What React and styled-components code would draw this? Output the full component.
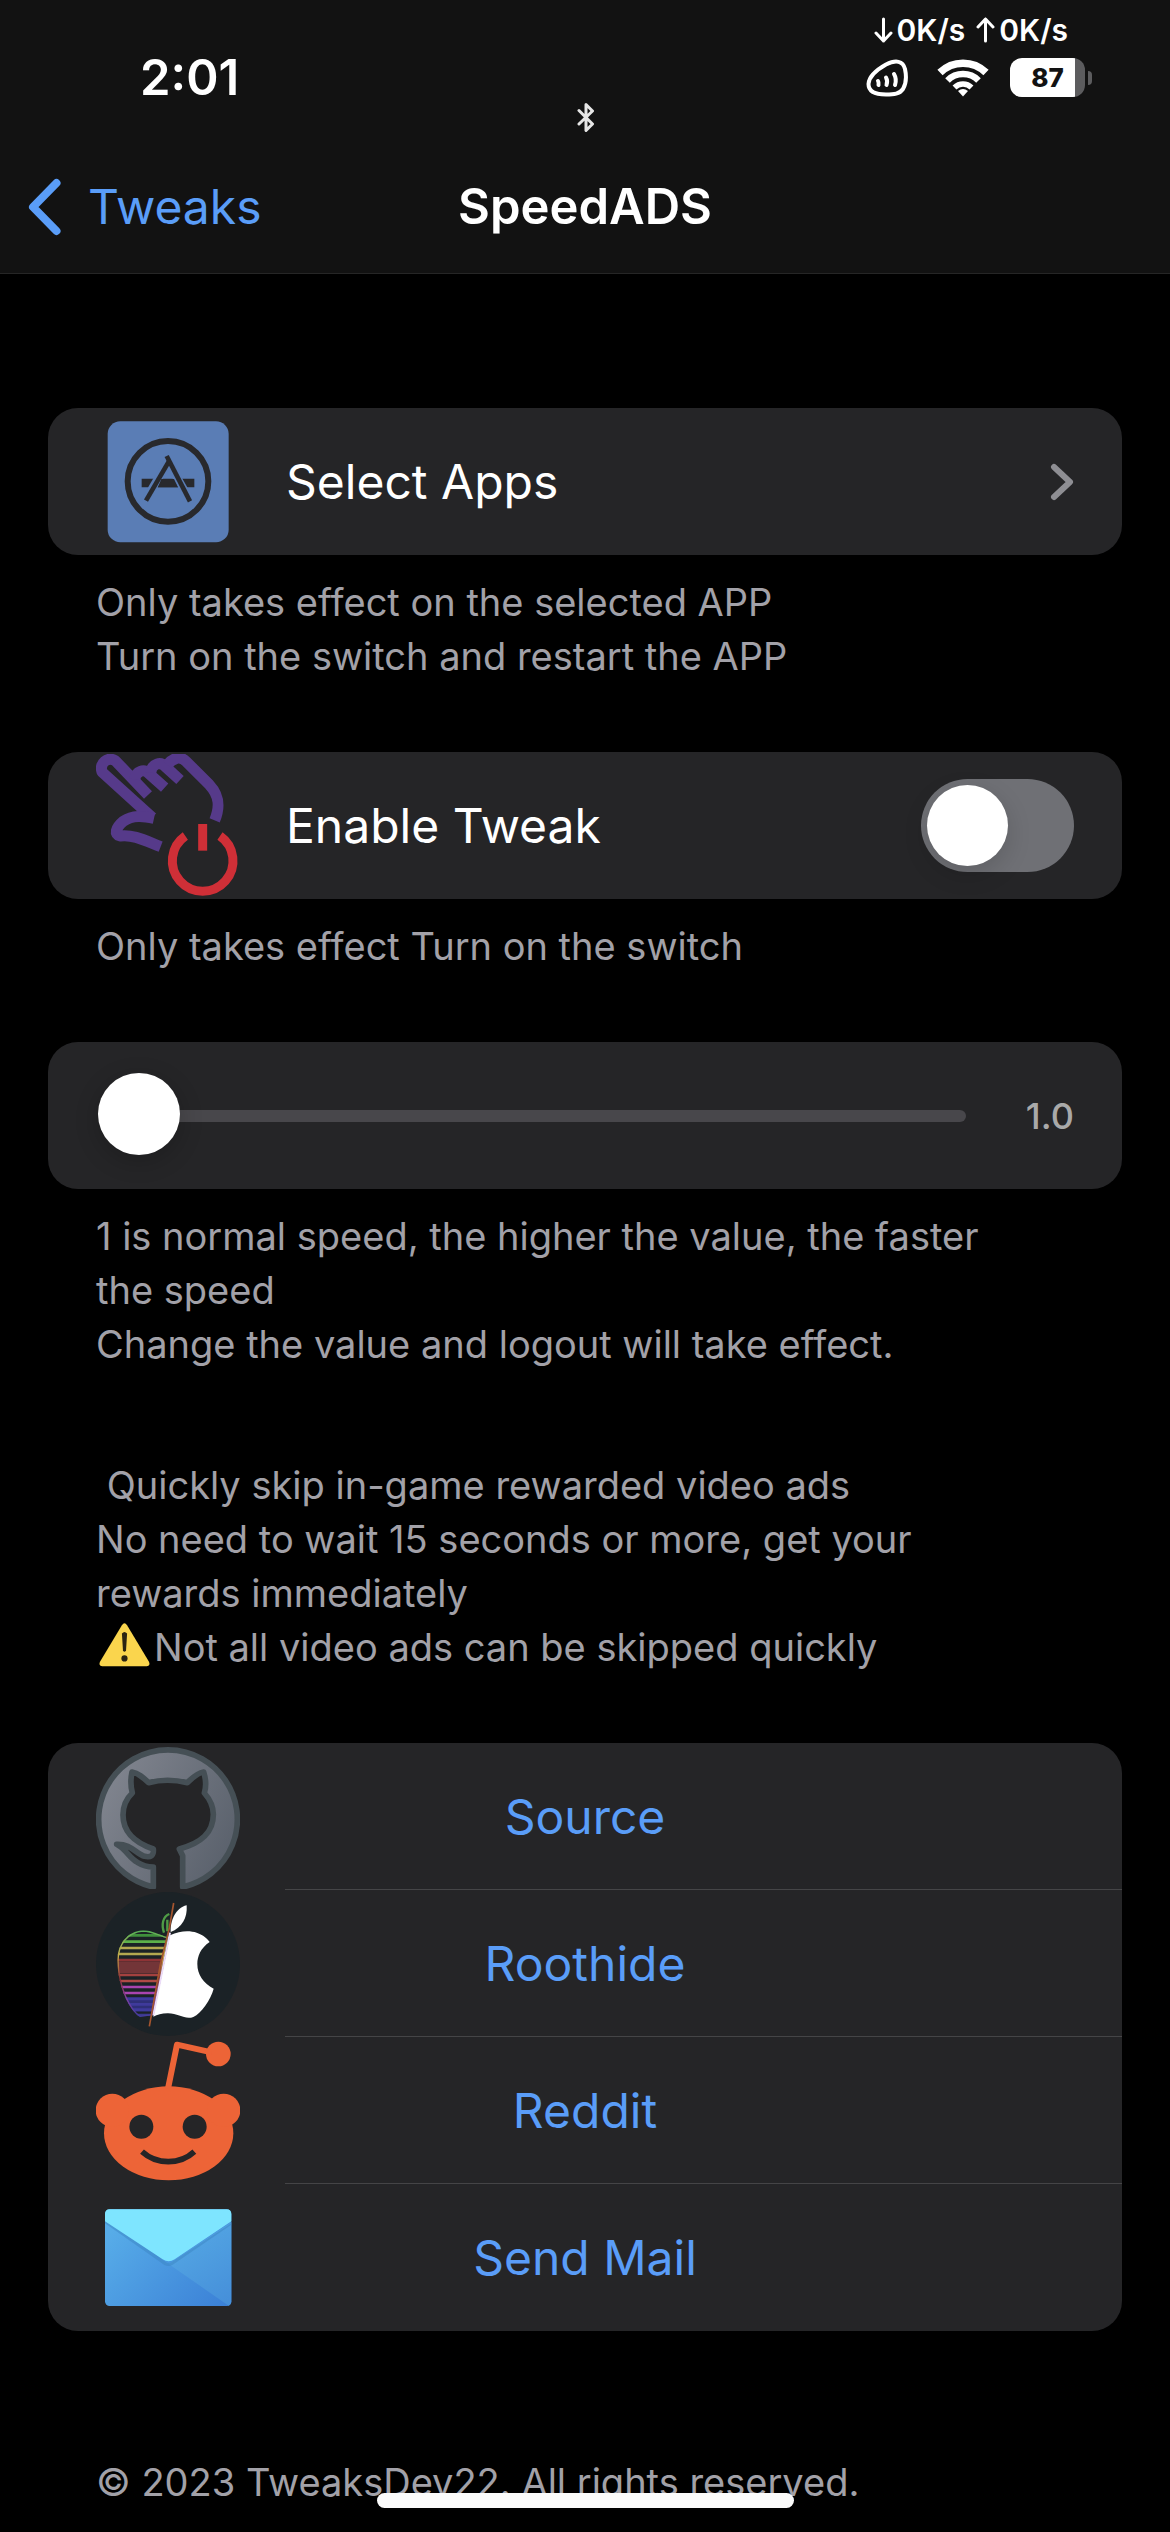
import React, { useState } from "react";
import styled, { createGlobalStyle } from "styled-components";

const GlobalStyle = createGlobalStyle`
  *, *::before, *::after { box-sizing: border-box; }
  body {
    margin: 0;
    background: #000;
    color: #fff;
    font-family: Inter, "Liberation Sans", sans-serif;
  }
  h1, p { margin: 0; }
`;

const Page = styled.div`
  min-height: 100vh;
  background: #000;
`;

const Header = styled.header`
  background: #121212;
  border-bottom: 1px solid #262626;
`;

const StatusBar = styled.div`
  display: grid;
  grid-template-columns: 1fr auto 1fr;
  height: 140px;
  padding: 0 78px 0 140px;
`;

const Clock = styled.time`
  padding-top: 46px;
  font-size: 49px;
  line-height: 64px;
  font-weight: 600;
`;

const BluetoothSlot = styled.div`
  align-self: end;
  display: flex;
  padding-bottom: 7px;
  margin-right: 60px;
`;

const StatusSide = styled.div`
  display: flex;
  flex-direction: column;
  align-items: flex-end;
  gap: 9px;
  padding-top: 11px;
`;

const NetSpeed = styled.div`
  display: flex;
  gap: 11px;
  padding-right: 24px;
  font-size: 30px;
  line-height: 38px;
  font-weight: 600;
`;

const Speed = styled.span`
  display: flex;
  align-items: center;
  gap: 4px;
`;

const StatusIcons = styled.div`
  display: flex;
  align-items: center;
`;

const IconGap = styled.div`
  display: flex;
  margin-right: ${(p) => p.$space}px;
`;

const Battery = styled.div`
  width: 75px;
  height: 39px;
  border-radius: 12px;
  display: flex;
  align-items: center;
  justify-content: center;
  background: linear-gradient(to right, #fff 87%, #5c5c5e 87%);
  color: #121212;
  font-size: 26px;
  font-weight: 800;
`;

const BatteryTip = styled.div`
  width: 4px;
  height: 14px;
  margin-left: 3px;
  border-radius: 0 4px 4px 0;
  background: #5c5c5e;
`;

const NavBar = styled.nav`
  display: grid;
  grid-template-columns: 1fr auto 1fr;
  align-items: center;
  height: 133px;
  padding: 0 28px;
`;

const BackLink = styled.a`
  display: flex;
  align-items: center;
  gap: 27px;
  color: #5a9df8;
  font-size: 48px;
  line-height: 64px;
  text-decoration: none;
`;

const Title = styled.h1`
  font-size: 49px;
  line-height: 64px;
  font-weight: 600;
`;

const Main = styled.main`
  display: flex;
  flex-direction: column;
  gap: 69px;
  padding: 134px 48px 0;
`;

const Card = styled.div`
  overflow: hidden;
  border-radius: 30px;
  background: #252527;
`;

const Row = styled.div`
  display: flex;
  align-items: center;
  gap: 46px;
  height: 147px;
  padding: 0 48px;
`;

const RowButton = styled(Row).attrs({ as: "button", type: "button" })`
  width: 100%;
  border: 0;
  background: none;
  color: inherit;
  font: inherit;
  text-align: left;
`;

const RowLabel = styled.label`
  flex: 1;
  font-size: 48px;
  line-height: 64px;
`;

const Picture = styled.svg`
  display: block;
  flex: none;
  width: 144px;
  height: 144px;
`;

const Glyph = styled.svg`
  display: block;
  flex: none;
`;

const Footnote = styled.p`
  padding: 20px 100px 0 48px;
  color: #a2a1a8;
  font-size: 38px;
  line-height: 54px;
  white-space: pre-line;
`;

const Intro = styled(Footnote)`
  padding-top: 18px;
  white-space: pre-wrap;
`;

const Warning = styled.svg`
  width: 58px;
  height: 48px;
  vertical-align: -8px;
`;

const Copyright = styled(Footnote)`
  padding-top: 55px;
  padding-bottom: 23px;
`;

const Switch = styled.input`
  appearance: none;
  width: 153px;
  height: 93px;
  margin: 0;
  padding: 6px;
  border-radius: 47px;
  background: ${(p) => (p.checked ? "#34c759" : "#6f7075")};
  display: flex;
  justify-content: ${(p) => (p.checked ? "flex-end" : "flex-start")};

  &::before {
    content: "";
    width: 81px;
    height: 81px;
    border-radius: 50%;
    background: #fff;
    box-shadow: 0 8px 24px rgba(0, 0, 0, 0.15);
  }
`;

const Slider = styled.input`
  appearance: none;
  flex: 1;
  min-width: 0;
  height: 84px;
  margin: 0 0 0 2px;
  background: none;

  &::-webkit-slider-runnable-track {
    height: 12px;
    border-radius: 6px;
    background: #48474b;
  }
  &::-webkit-slider-thumb {
    appearance: none;
    width: 82px;
    height: 82px;
    margin-top: -37px;
    border-radius: 50%;
    background: #fff;
    box-shadow: 0 6px 24px rgba(0, 0, 0, 0.2);
  }
`;

const SliderValue = styled.output`
  width: 62px;
  text-align: right;
  white-space: nowrap;
  color: #a9a9a9;
  font-size: 36px;
  line-height: 48px;
  font-weight: 500;
`;

const LinkRow = styled.a`
  display: flex;
  align-items: center;
  gap: 45px;
  height: 147px;
  padding-left: 48px;
  color: #5a9df8;
  text-decoration: none;

  &:last-child > span { border-bottom-color: transparent; }
`;

const LinkLabel = styled.span`
  flex: 1;
  display: flex;
  align-items: center;
  justify-content: center;
  height: 147px;
  padding-right: 237px;
  border-bottom: 1px solid #454547;
  font-size: 48px;
`;

const HomeIndicator = styled.div`
  position: fixed;
  bottom: 24px;
  left: 50%;
  width: 417px;
  height: 15px;
  margin-left: -208px;
  border-radius: 8px;
  background: #fbfbfb;
`;

function ArrowGlyph({ up }) {
  return (
    <Glyph width="19" height="26" viewBox="0 0 19 26" fill="none" stroke="#fff" strokeWidth="3" strokeLinecap="round" strokeLinejoin="round" aria-hidden="true">
      {up ? <path d="M9.500 24V2M2 10L9.500 2L17 10" /> : <path d="M9.500 2V24M2 16L9.500 24L17 16" />}
    </Glyph>
  );
}

function BluetoothGlyph() {
  return (
    <Glyph width="18" height="31" viewBox="0 0 18 31" fill="none" stroke="#e6e6e6" strokeWidth="3" strokeLinejoin="round" strokeLinecap="round" aria-label="Bluetooth">
      <path d="M2 8.500L15.500 22L9 28.500V2.500L15.500 9L2 22" />
    </Glyph>
  );
}

function SignalGlyph() {
  return (
    <Glyph width="42" height="38" viewBox="0 -2 42 38" fill="none" stroke="#fff" strokeWidth="4" strokeLinecap="round" aria-hidden="true">
      <path d="M20 3.500C30 -1.500 37 0 39 8C40.500 15 40.500 22 37 28C33.500 33 28 33.500 20 33.500C11 33.500 2.500 32 2.500 23C3 14.500 12 8 20 3.500Z" />
      <path d="M12 20Q13 21.500 12.500 24M20 16.500Q22 20 20.500 24M28 13Q31 18 29 24" />
    </Glyph>
  );
}

function WifiGlyph() {
  return (
    <Glyph width="52" height="38" viewBox="0 0 52 38" fill="none" stroke="#fff" strokeWidth="7.500" aria-hidden="true">
      <path d="M3 13.500A33 33 0 0 1 49 13.500" />
      <path d="M10.500 21.500A22 22 0 0 1 41.500 21.500" strokeWidth="6.500" />
      <path d="M17.500 28.500A12 12 0 0 1 34.500 28.500" strokeWidth="5.500" />
      <path d="M26 37.500L21 32A8 8 0 0 1 31 32Z" fill="#fff" stroke="none" />
    </Glyph>
  );
}

function AppsPicture() {
  return (
    <Picture viewBox="18 -2 432 432" aria-hidden="true">
      <rect x="53" y="32" width="363" height="363" rx="38" fill="#5a7db5" />
      <circle cx="234" cy="212" r="121" fill="none" stroke="#28292d" strokeWidth="18" />
      <path d="M155 217H313" stroke="#28292d" strokeWidth="26" />
      <g fill="none" strokeWidth="25" stroke="#5a7db5">
        <path d="M232 156L170 262" />
        <path d="M232 150L296 262" />
      </g>
      <path d="M204 230L214 205H252L264 230Z" fill="#28292d" />
      <g fill="none" strokeWidth="14" stroke="#28292d">
        <path d="M238 150L168 270" />
        <path d="M230 136L300 272" />
      </g>
    </Picture>
  );
}

function TweakPicture() {
  return (
    <Picture viewBox="18 1030 432 432" aria-hidden="true">
      <g fill="none" stroke="#563a8a" strokeWidth="33" strokeLinejoin="round">
        <path d="M187 1221L36 1084C28 1058 52 1036 76 1050L174 1153" />
        <path d="M134 1106C138 1080 162 1074 176 1088L224 1131" />
        <path d="M182 1086C186 1058 212 1052 226 1068L270 1108" />
        <path d="M232 1062C250 1040 272 1036 288 1052L358 1122C390 1156 390 1190 374 1229" />
        <path d="M192 1223C160 1216 128 1212 100 1232C76 1252 72 1272 90 1276C130 1270 170 1292 212 1308" />
      </g>
      <g fill="none" stroke="#cf2f37" strokeWidth="27">
        <path d="M338 1240V1320" />
        <path d="M286 1276A91 91 0 1 0 390 1276" />
      </g>
    </Picture>
  );
}

function GithubPicture() {
  return (
    <Picture viewBox="48 40 432 432" aria-hidden="true">
      <defs>
        <linearGradient id="gh" x1="0" y1="0.200" x2="1" y2="0.700">
          <stop offset="0" stopColor="#828690" />
          <stop offset="1" stopColor="#5a616c" />
        </linearGradient>
      </defs>
      <path
        d="M220 466A208 208 0 1 1 308 466L308 372L298 352C362 335 400 305 400 248C400 218 387 200 373 184C379 165 377 140 371 121C350 124 336 140 322 153C285 144 240 144 206 153C190 138 175 124 156 121C151 145 152 165 157 184C140 200 129 220 129 250C129 305 170 335 220 352C222 372 212 378 194 374C168 366 152 336 110 338C138 352 148 380 172 392C188 402 204 406 220 406Z"
        fill="url(#gh)"
        stroke="#454f55"
        strokeWidth="17"
        strokeLinejoin="round"
      />
    </Picture>
  );
}

const STRIPES = [
  [612, "#3f8f3c"], [631, "#5cb04a"], [650, "#b3a850"], [668, "#b3a850"],
  [686, "#8e3336"], [731, "#a3413f"], [749, "#b04a46"], [767, "#a944b0"],
  [785, "#a944b0"], [803, "#3f3a9c"], [819, "#3f3a9c"], [835, "#3f3a9c"], [851, "#3a3a8c"],
];

function ApplePicture() {
  const half = "M264 618C240 612 215 597 190 597C140 600 112 640 112 690C114 770 150 840 180 857L218 852Z";
  return (
    <Picture viewBox="48 482 432 432" aria-hidden="true">
      <defs>
        <clipPath id="half"><path d={half} /></clipPath>
        <linearGradient id="edge" x1="0" y1="0" x2="0" y2="1">
          <stop offset="0" stopColor="#55b058" />
          <stop offset="0.300" stopColor="#c9ad4c" />
          <stop offset="0.550" stopColor="#8e3336" />
          <stop offset="0.800" stopColor="#8040a0" />
          <stop offset="1" stopColor="#3f3a9c" />
        </linearGradient>
      </defs>
      <circle cx="264" cy="698" r="216" fill="#1b2226" />
      <g clipPath="url(#half)">
        <rect x="100" y="690" width="170" height="36" fill="#733538" />
        <rect x="100" y="797" width="170" height="44" fill="#2f2f78" />
        {STRIPES.map(([y, color]) => (
          <path key={y} d={`M100 ${y}H270`} stroke={color} strokeWidth="8" />
        ))}
        <path d={half} fill="none" stroke="url(#edge)" strokeWidth="8" />
      </g>
      <path d="M268 548C248 556 244 580 252 604M262 565V600" fill="none" stroke="#4f9c46" strokeWidth="7" />
      <path d="M270 612C300 597 330 597 350 604C370 611 382 621 389 632C362 650 352 675 352 698C352 730 370 755 401 772C392 805 365 845 340 857C315 867 295 845 262 846C245 846 232 850 220 856Z" fill="#fff" />
      <path d="M272 602C270 570 286 530 320 522C323 560 305 590 272 602Z" fill="#fff" />
      <path d="M270 604L220 852" fill="none" stroke="#ecdcf8" strokeWidth="6" />
      <path d="M281 515L268 590L241 700L214 852L208 885" fill="none" stroke="#a5552e" strokeWidth="5" />
    </Picture>
  );
}

function RedditPicture() {
  return (
    <Picture viewBox="48 55 432 432" aria-hidden="true">
      <g fill="#ed6437">
        <ellipse cx="266" cy="338" rx="194" ry="141" />
        <circle cx="97" cy="269" r="50" />
        <circle cx="431" cy="269" r="50" />
        <circle cx="415" cy="100" r="37" />
      </g>
      <path d="M264 204L291 72L395 95" fill="none" stroke="#ed6437" strokeWidth="18" strokeLinejoin="round" />
      <circle cx="184" cy="318" r="36" fill="#252527" />
      <circle cx="344" cy="318" r="36" fill="#252527" />
      <path d="M186 393C230 433 300 433 343 393" fill="none" stroke="#252527" strokeWidth="17" />
    </Picture>
  );
}

function MailPicture() {
  return (
    <Picture viewBox="48 496 432 432" aria-hidden="true">
      <defs>
        <linearGradient id="mail" x1="0" y1="0.300" x2="1" y2="1">
          <stop offset="0" stopColor="#57ace8" />
          <stop offset="1" stopColor="#3a7fd6" />
        </linearGradient>
        <linearGradient id="mailRight" x1="0.300" y1="0" x2="0.800" y2="1">
          <stop offset="0" stopColor="#55a8e4" />
          <stop offset="1" stopColor="#4690da" />
        </linearGradient>
      </defs>
      <rect x="75" y="566" width="379" height="290" rx="14" fill="url(#mail)" />
      <path d="M266 730L454 604V842Q454 852 446 855Z" fill="url(#mailRight)" />
      <path d="M75 608V582L260 726Q266 730 272 726L454 608V612L278 732Q266 740 252 732Z" fill="#3c86c4" opacity="0.500" />
      <path d="M89 566H440Q454 566 454 580V602L284 716Q266 728 248 716L75 602V580Q75 566 89 566Z" fill="#7ee5ff" />
    </Picture>
  );
}

function WarningSign() {
  return (
    <Warning viewBox="-1 0 56 46" role="img" aria-label="Warning">
      <path d="M24 4Q26.500 0 29 4L50 39Q52 43 48 43.500H5Q1 43 3 39Z" fill="#fad54d" />
      <path d="M24 12Q26.500 9 29 12L28 28Q26.500 31 25 28Z" fill="#2b2412" />
      <circle cx="26.500" cy="36" r="3" fill="#2b2412" />
    </Warning>
  );
}

const LINKS = [
  { label: "Source", href: "#source", Icon: GithubPicture },
  { label: "Roothide", href: "#roothide", Icon: ApplePicture },
  { label: "Reddit", href: "#reddit", Icon: RedditPicture },
  { label: "Send Mail", href: "#mail", Icon: MailPicture },
];

export default function App() {
  const [enabled, setEnabled] = useState(false);
  const [speed, setSpeed] = useState(1);

  return (
    <Page>
      <GlobalStyle />
      <Header>
        <StatusBar>
          <Clock>2:01</Clock>
          <BluetoothSlot><BluetoothGlyph /></BluetoothSlot>
          <StatusSide>
            <NetSpeed>
              <Speed><ArrowGlyph />0K/s</Speed>
              <Speed><ArrowGlyph up />0K/s</Speed>
            </NetSpeed>
            <StatusIcons>
              <IconGap $space={29}><SignalGlyph /></IconGap>
              <IconGap $space={21}><WifiGlyph /></IconGap>
              <Battery>87</Battery>
              <BatteryTip />
            </StatusIcons>
          </StatusSide>
        </StatusBar>
        <NavBar>
          <BackLink href="#tweaks">
            <Glyph width="33" height="58" viewBox="0 0 33 58" fill="none" stroke="#5a9df8" strokeWidth="8" strokeLinecap="round" strokeLinejoin="round" aria-hidden="true">
              <path d="M28.500 5L5 29L28.500 53" />
            </Glyph>
            Tweaks
          </BackLink>
          <Title>SpeedADS</Title>
        </NavBar>
      </Header>

      <Main>
        <section>
          <Card>
            <RowButton>
              <AppsPicture />
              <RowLabel as="span">Select Apps</RowLabel>
              <Glyph width="24" height="38" viewBox="0 0 24 38" fill="none" stroke="#8e8e93" strokeWidth="6" strokeLinecap="round" strokeLinejoin="round" aria-hidden="true">
                <path d="M4 4L20 19L4 34" />
              </Glyph>
            </RowButton>
          </Card>
          <Footnote>{"Only takes effect on the selected APP\nTurn on the switch and restart the APP"}</Footnote>
        </section>

        <section>
          <Card>
            <Row>
              <TweakPicture />
              <RowLabel htmlFor="enable">Enable Tweak</RowLabel>
              <Switch id="enable" type="checkbox" role="switch" checked={enabled} onChange={(e) => setEnabled(e.target.checked)} />
            </Row>
          </Card>
          <Footnote>Only takes effect Turn on the switch</Footnote>
        </section>

        <section>
          <Card>
            <Row>
              <Slider type="range" id="speed" aria-label="Speed" min="1" max="20" step="0.1" value={speed} onChange={(e) => setSpeed(Number(e.target.value))} />
              <SliderValue htmlFor="speed">{speed.toFixed(1)}</SliderValue>
            </Row>
          </Card>
          <Footnote>{"1 is normal speed, the higher the value, the faster the speed\nChange the value and logout will take effect."}</Footnote>
        </section>

        <Intro>
          {" Quickly skip in-game rewarded video ads\nNo need to wait 15 seconds or more, get your rewards immediately\n"}
          <WarningSign />
          Not all video ads can be skipped quickly
        </Intro>

        <Card>
          {LINKS.map(({ label, href, Icon }) => (
            <LinkRow key={label} href={href}>
              <Icon />
              <LinkLabel>{label}</LinkLabel>
            </LinkRow>
          ))}
        </Card>

        <Copyright as="footer">© 2023 TweaksDev22. All rights reserved.</Copyright>
      </Main>
      <HomeIndicator />
    </Page>
  );
}
